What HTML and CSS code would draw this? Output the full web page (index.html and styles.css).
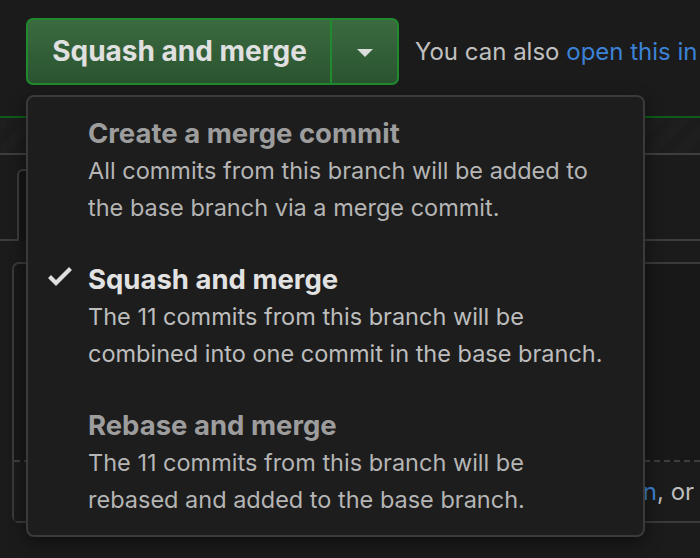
FILE: index.html
```html
<!DOCTYPE html>
<html lang="en">
<head>
<meta charset="utf-8">
<title>Merge options</title>
<link rel="stylesheet" href="styles.css">
</head>
<body>
<div class="page">
  <div class="merge-row">
    <div class="btn-group">
      <button class="btn-main" type="button">Squash and merge</button>
      <button class="btn-caret" type="button" aria-label="Select merge method"><span class="caret"></span></button>
    </div>
    <p class="alt">You can also <a href="#">open this in GitHub Desktop</a> or view command line instructions.</p>
  </div>

  <div class="status-bar"></div>

  <div class="tabnav">
    <div class="tab"></div>
  </div>

  <div class="box">
    <div class="box-body"></div>
    <div class="box-footer">
      <span class="footer-lead">Checks run by <a href="#">continuous integration</a></span><span class="footer-rest">, or view the instructions.</span>
    </div>
  </div>

  <div class="menu" role="menu">
    <div class="menu-item">
      <span class="check"></span>
      <div class="item-text">
        <div class="item-title">Create a merge commit</div>
        <div class="item-desc">All commits from this branch will be added to<br>the base branch via a merge commit.</div>
      </div>
    </div>
    <div class="menu-item selected">
      <span class="check">
        <svg viewBox="0 3 12 10" width="24" height="20" aria-hidden="true"><path d="M12 5l-8 8-4-4 1.5-1.5L4 10l6.5-6.5L12 5z"/></svg>
      </span>
      <div class="item-text">
        <div class="item-title">Squash and merge</div>
        <div class="item-desc">The 11 commits from this branch will be<br>combined into one commit in the base branch.</div>
      </div>
    </div>
    <div class="menu-item">
      <span class="check"></span>
      <div class="item-text">
        <div class="item-title">Rebase and merge</div>
        <div class="item-desc">The 11 commits from this branch will be<br>rebased and added to the base branch.</div>
      </div>
    </div>
  </div>
</div>
</body>
</html>
```

FILE: styles.css
```css
html, body {
  margin: 0;
  padding: 0;
  background: #1b1b1b;
}

body {
  font-family: Inter, "Noto Sans", sans-serif;
  color: #c4c4c4;
  overflow: hidden;
  width: 700px;
  height: 558px;
}

.page {
  position: relative;
  width: 700px;
  height: 558px;
  overflow: hidden;
}

.merge-row {
  display: flex;
  align-items: center;
  padding: 18px 0 0 26px;
  gap: 16px;
  white-space: nowrap;
}

.btn-group {
  display: flex;
  height: 67px;
  box-sizing: border-box;
  border: 2px solid #1f8a2e;
  border-radius: 7px;
  overflow: hidden;
  background: linear-gradient(#3b6a3f, #2a5430);
  flex: none;
}

.btn-main,
.btn-caret {
  font-family: inherit;
  background: transparent;
  border: 0;
  margin: 0;
  color: #e0e0e0;
  font-weight: 700;
  font-size: 28px;
  line-height: 63px;
  padding: 0;
}

.btn-main {
  width: 304px;
  padding-left: 1px;
  text-align: center;
  border-right: 2px solid #1f8a2e;
}

.btn-caret {
  width: 65px;
  display: flex;
  align-items: center;
  justify-content: center;
}

.caret {
  display: block;
  width: 0;
  height: 0;
  border-left: 8px solid transparent;
  border-right: 8px solid transparent;
  border-top: 8px solid #dcdcdc;
  margin-top: 2px;
}

.alt {
  margin: 0;
  font-size: 24px;
  color: #c0c0c0;
}

.alt a,
.footer-lead a {
  color: #3b82d6;
  text-decoration: none;
}

.status-bar {
  margin-top: 31px;
  height: 35px;
  border-top: 2px solid #0f5c1a;
  border-bottom: 2px solid #3e3e3e;
  background: repeating-linear-gradient(135deg, #1e1e1e 0 10px, #1c1c1c 10px 20px);
}

.tabnav {
  margin-top: 14px;
  height: 70px;
  border-bottom: 2px solid #3c3c3c;
  display: flex;
  align-items: flex-end;
}

.tab {
  margin-left: 17px;
  width: 300px;
  box-sizing: border-box;
  border: 2px solid #3c3c3c;
  border-bottom: 0;
  border-radius: 6px 6px 0 0;
  background: #161616;
  margin-bottom: -2px;
  height: 72px;
}

.box {
  margin: 21px 0 0 12px;
  width: 760px;
  height: 261px;
  box-sizing: border-box;
  border: 2px solid #3a3a3a;
  border-radius: 7px;
  background: #181818;
  display: flex;
  flex-direction: column;
}

.box-body {
  height: 196px;
  border-bottom: 2px dashed #3e3e3e;
}

.box-footer {
  flex: 1;
  display: flex;
  align-items: center;
  font-size: 24px;
  color: #bdbdbd;
  white-space: nowrap;
  background: #1b1b1b;
}

.footer-lead {
  flex: none;
  width: 643px;
  text-align: right;
}

.footer-rest {
  flex: none;
}

.menu {
  position: absolute;
  left: 26px;
  top: 95px;
  width: 619px;
  box-sizing: border-box;
  border: 2px solid #3a3a3a;
  border-radius: 8px;
  background: #1d1d1d;
  box-shadow: 0 6px 18px rgba(0, 0, 0, 0.45);
}

.menu-item {
  display: flex;
  padding: 18px 0 17px 0;
}

.check {
  width: 60px;
  flex: none;
  display: flex;
  justify-content: flex-end;
  align-items: flex-start;
  padding: 5px 16px 0 0;
  box-sizing: border-box;
}

.check svg {
  fill: #dedede;
  display: block;
}

.item-title {
  font-size: 27.5px;
  font-weight: 700;
  line-height: 37px;
  color: #9d9d9d;
}

.item-desc {
  font-size: 23.5px;
  line-height: 37px;
  color: #b5b5b5;
}

.selected .item-title {
  color: #e2e2e2;
}

.selected .item-desc {
  color: #bdbdbd;
}
```
